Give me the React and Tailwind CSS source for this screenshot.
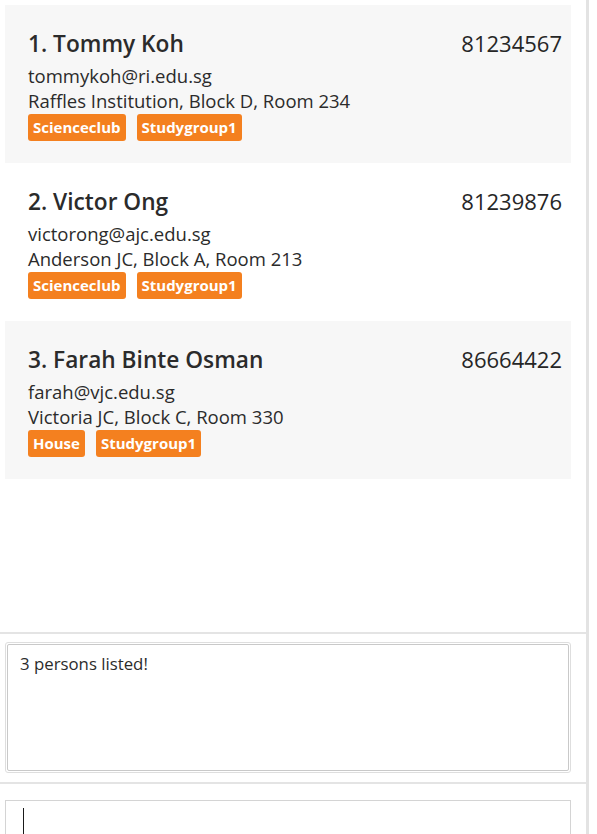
import React from 'react';

const persons = [
  {
    name: 'Tommy Koh',
    phone: '81234567',
    email: 'tommykoh@ri.edu.sg',
    address: 'Raffles Institution, Block D, Room 234',
    tags: ['Scienceclub', 'Studygroup1'],
  },
  {
    name: 'Victor Ong',
    phone: '81239876',
    email: 'victorong@ajc.edu.sg',
    address: 'Anderson JC, Block A, Room 213',
    tags: ['Scienceclub', 'Studygroup1'],
  },
  {
    name: 'Farah Binte Osman',
    phone: '86664422',
    email: 'farah@vjc.edu.sg',
    address: 'Victoria JC, Block C, Room 330',
    tags: ['House', 'Studygroup1'],
  },
];

const PersonCard = ({ person, index }) => (
  <div
    className={`h-[158px] pl-[23px] pr-[9px] pt-[27px] ${
      index % 2 === 0 ? 'bg-[#f7f7f7]' : 'bg-white'
    }`}
  >
    <div className="flex items-baseline justify-between">
      <span className="text-[22.7px] leading-[23px] font-semibold text-[#2b2b2b]">
        {index + 1}. {person.name}
      </span>
      <span className="text-[22px] leading-[23px] font-medium text-[#262626]">{person.phone}</span>
    </div>
    <div className="mt-[8px] text-[18.5px] leading-[25px] text-[#2b2b2b]">{person.email}</div>
    <div className="text-[18.5px] leading-[25px] text-[#2b2b2b]">{person.address}</div>
    <div className="mt-[1px] flex gap-[11px]">
      {person.tags.map((tag) => (
        <span
          key={tag}
          className="h-[27px] rounded-[3px] bg-[#f4801f] px-[5px] text-[15px] leading-[27px] font-bold text-white"
        >
          {tag}
        </span>
      ))}
    </div>
  </div>
);

const App = () => {
  return (
    <div
      className="flex h-[834px] w-[597px] overflow-hidden bg-white"
      style={{ fontFamily: '"Open Sans", "Noto Sans", sans-serif' }}
    >
      <div className="flex h-[834px] w-[586px] shrink-0 flex-col overflow-hidden">
        {/* person list */}
        <div className="h-[632px] shrink-0 pl-[5px] pr-[15px] pt-[5px]">
          {persons.map((p, i) => (
            <PersonCard key={p.name} person={p} index={i} />
          ))}
        </div>

        {/* result display */}
        <div className="h-[152px] shrink-0 border-t-2 border-b-2 border-[#e4e4e4] pl-[5px] pr-[15px] pt-[8px]">
          <div className="h-[131px] rounded-[3px] border border-[#dedede] p-px">
            <div className="h-full rounded-[2px] border border-[#c9c9c9] px-[12px] pt-[7px] text-[16.8px] leading-[24px] text-[#2b2b2b]">
              3 persons listed!
            </div>
          </div>
        </div>

        {/* command box */}
        <div className="h-[50px] shrink-0 pl-[5px] pr-[15px] pt-[16px]">
          <div className="h-[60px] border border-[#d4d4d4] pl-[17px] pt-[7px]">
            <div className="h-[30px] w-px bg-[#1a1a1a]" />
          </div>
        </div>
      </div>
      <div className="w-[3px] shrink-0 bg-[#e3e3e3]" />
      <div className="flex-1 bg-white" />
    </div>
  );
};

export default App;
